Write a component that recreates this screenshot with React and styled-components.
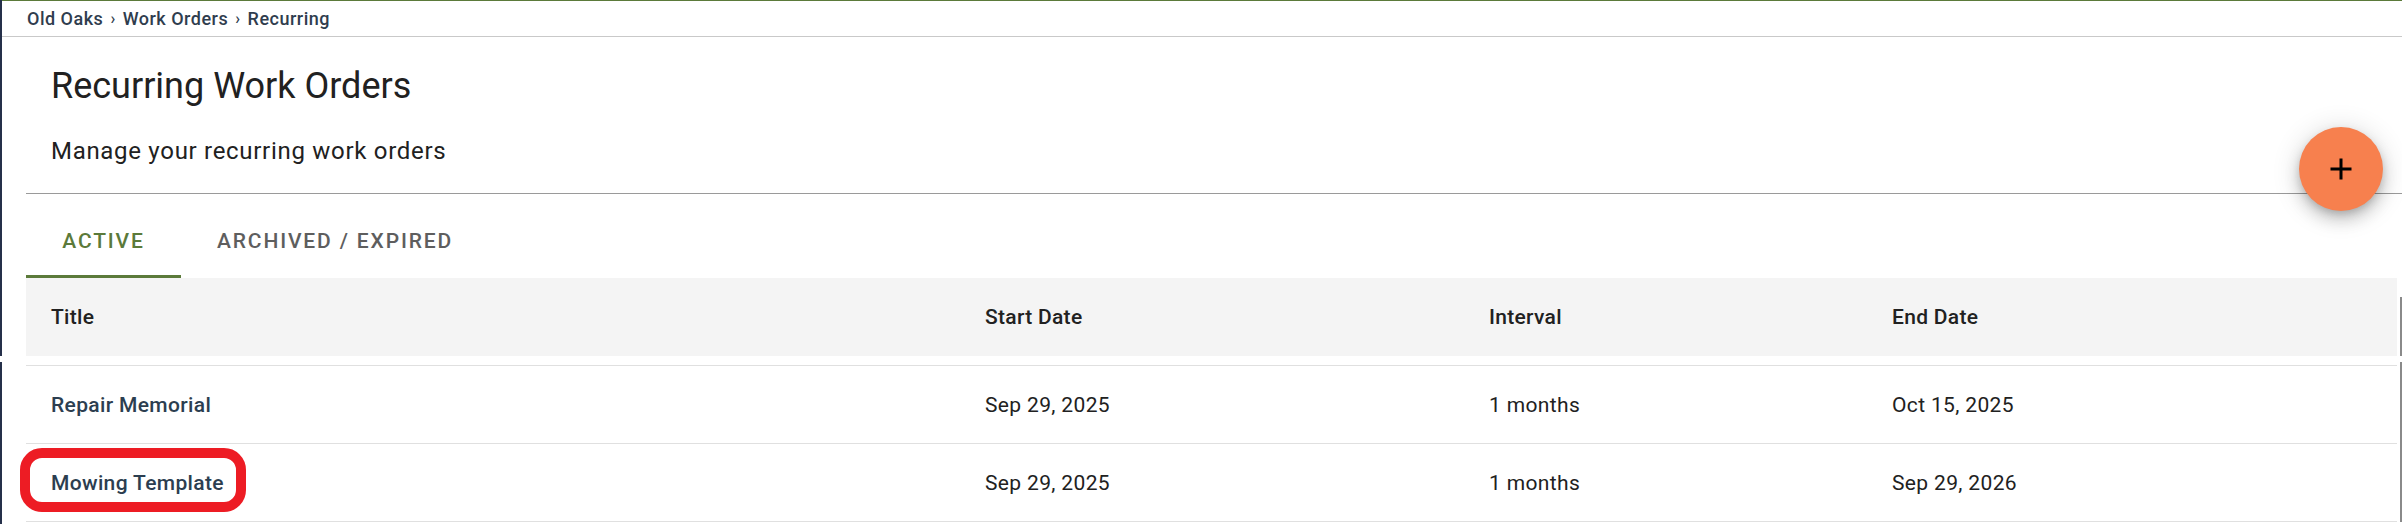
import React from "react";
import styled, { createGlobalStyle } from "styled-components";

const Global = createGlobalStyle`
  html, body { margin: 0; padding: 0; background: #ffffff; }
  body { font-family: Roboto, "Liberation Sans", Arial, sans-serif; }
  * { box-sizing: border-box; }
`;

const Page = styled.div`
  position: relative;
  width: 2402px;
  min-height: 524px;
  padding-left: 2px;
  background-image: linear-gradient(
    to bottom,
    #25304a 0px,
    #25304a 356px,
    #ffffff 356px,
    #ffffff 362px,
    #25304a 362px
  );
  background-size: 2px 100%;
  background-repeat: no-repeat;
  overflow: hidden;
`;

const Frame = styled.div`
  border-top: 1px solid #5b7a3a;
`;

const Breadcrumb = styled.nav`
  height: 36px;
  display: flex;
  align-items: center;
  gap: 7px;
  padding-left: 25px;
  border-bottom: 1px solid #c9c9c9;
  font-size: 18px;
  font-weight: 500;
  letter-spacing: 0.5px;
  color: #2f3d4e;
`;

const Crumb = styled.span`
  white-space: nowrap;
`;

const Sep = styled.span`
  font-size: 16px;
  color: #2f3d4e;
`;

const Content = styled.main`
  padding-left: 24px;
`;

const Heading = styled.header`
  padding-left: 25px;
  padding-top: 29px;
  padding-bottom: 27px;
`;

const Title = styled.h1`
  margin: 0;
  font-size: 36px;
  line-height: 40px;
  font-weight: 400;
  color: #212121;
`;

const Subtitle = styled.p`
  margin: 30px 0 0;
  font-size: 24px;
  line-height: 30px;
  font-weight: 400;
  letter-spacing: 0.7px;
  color: #212121;
`;

const Divider = styled.hr`
  margin: 0;
  border: 0;
  height: 1px;
  background: #9a9a9a;
`;

const TabList = styled.div`
  display: flex;
  margin-top: 12px;
  height: 72px;
`;

const Tab = styled.button`
  appearance: none;
  border: 0;
  background: transparent;
  font-family: inherit;
  min-width: 155px;
  padding: 0 36px;
  height: 72px;
  display: flex;
  align-items: center;
  justify-content: center;
  font-size: 21px;
  font-weight: 500;
  letter-spacing: 1.85px;
  text-transform: uppercase;
  color: ${(p) => (p.$active ? "#5b7a3a" : "#5e5e5e")};
  border-bottom: 3px solid ${(p) => (p.$active ? "#5b7a3a" : "transparent")};
  cursor: pointer;
`;

const TableArea = styled.div`
  display: flex;
  align-items: flex-start;
`;

const Table = styled.div`
  flex: 1;
`;

const ScrollTrack = styled.div`
  width: 2px;
  margin-left: 3px;
  margin-top: 19px;
  align-self: stretch;
  background-image: linear-gradient(
    to bottom,
    #8a8a8a 0px,
    #8a8a8a 59px,
    #ffffff 59px,
    #ffffff 65px,
    #8a8a8a 65px
  );
`;

const Grid = styled.div`
  display: grid;
  grid-template-columns: 934px 504px 403px 1fr;
  align-items: center;
`;

const HeadRow = styled(Grid)`
  height: 78px;
  background: #f4f4f4;
`;

const Body = styled.div`
  margin-top: 9px;
  border-top: 1px solid #e0e0e0;
`;

const Row = styled(Grid)`
  height: 78px;
  border-bottom: 1px solid #e0e0e0;
`;

const HeadCell = styled.div`
  padding-left: 25px;
  font-size: 21px;
  font-weight: 500;
  letter-spacing: 0.3px;
  color: #212121;
`;

const Cell = styled.div`
  padding-left: 25px;
  font-size: 21px;
  letter-spacing: 0.35px;
  font-weight: ${(p) => (p.$title ? 500 : 400)};
  color: ${(p) => (p.$title ? "#2c3e50" : "#212121")};
  white-space: nowrap;
`;

const Fab = styled.button`
  position: absolute;
  left: 2299px;
  top: 127px;
  width: 84px;
  height: 84px;
  border-radius: 50%;
  border: 0;
  background: #f7804e;
  display: flex;
  align-items: center;
  justify-content: center;
  box-shadow: 0 4px 8px -2px rgba(0, 0, 0, 0.2), 0 9px 15px 1px rgba(0, 0, 0, 0.14),
    0 3px 27px 3px rgba(0, 0, 0, 0.12);
  cursor: pointer;
`;

const Highlight = styled.div`
  position: absolute;
  left: 20px;
  top: 448px;
  width: 226px;
  height: 64px;
  border: 10px solid #ed1c24;
  border-radius: 22px;
  pointer-events: none;
`;

const rows = [
  { title: "Repair Memorial", start: "Sep 29, 2025", interval: "1 months", end: "Oct 15, 2025" },
  { title: "Mowing Template", start: "Sep 29, 2025", interval: "1 months", end: "Sep 29, 2026" },
];

export default function App() {
  return (
    <>
      <Global />
      <Page>
        <Frame>
          <Breadcrumb>
            <Crumb>Old Oaks</Crumb>
            <Sep>›</Sep>
            <Crumb>Work Orders</Crumb>
            <Sep>›</Sep>
            <Crumb>Recurring</Crumb>
          </Breadcrumb>
          <Content>
            <Heading>
              <Title>Recurring Work Orders</Title>
              <Subtitle>Manage your recurring work orders</Subtitle>
            </Heading>
            <Divider />
            <TabList>
              <Tab $active>Active</Tab>
              <Tab>Archived / Expired</Tab>
            </TabList>
            <TableArea>
              <Table>
                <HeadRow>
                  <HeadCell>Title</HeadCell>
                  <HeadCell>Start Date</HeadCell>
                  <HeadCell>Interval</HeadCell>
                  <HeadCell>End Date</HeadCell>
                </HeadRow>
                <Body>
                  {rows.map((r) => (
                    <Row key={r.title}>
                      <Cell $title>{r.title}</Cell>
                      <Cell>{r.start}</Cell>
                      <Cell>{r.interval}</Cell>
                      <Cell>{r.end}</Cell>
                    </Row>
                  ))}
                </Body>
              </Table>
              <ScrollTrack />
            </TableArea>
          </Content>
        </Frame>
        <Fab aria-label="add">
          <svg width="36" height="36" viewBox="0 0 24 24">
            <path d="M19 13h-6v6h-2v-6H5v-2h6V5h2v6h6v2z" fill="#000" />
          </svg>
        </Fab>
        <Highlight />
      </Page>
    </>
  );
}
